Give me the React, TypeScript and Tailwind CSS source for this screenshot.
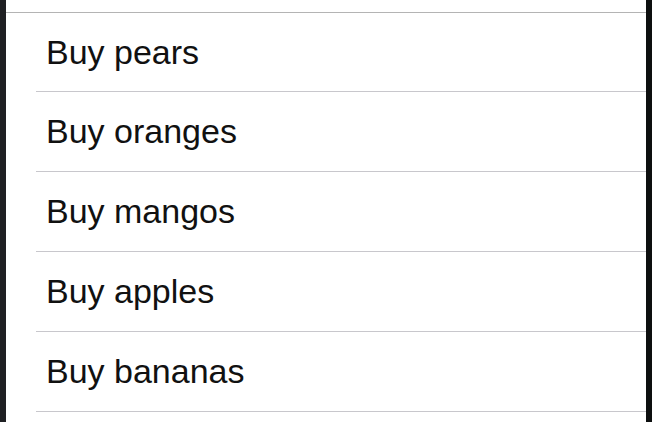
const items = ['Buy pears', 'Buy oranges', 'Buy mangos', 'Buy apples', 'Buy bananas'];

export default function App() {
  return (
    <div className="flex h-[422px] w-[652px] overflow-hidden bg-[#1c1d20]">
      <div className="w-[6px] bg-[#1f2023]" />
      <div className="flex-1 bg-white">
        <div className="h-[12px]" />
        <div className="h-px bg-[#b4b4b4]" />
        {items.map((item, i) => (
          <div key={item}>
            <div
              className={`flex items-center pl-[40px] text-[34px] text-[#111] ${i === 0 ? 'h-[78px]' : 'h-[79px]'}`}
              style={{ fontFamily: '"Liberation Sans", Arial, sans-serif' }}
            >
              {item}
            </div>
            <div className="ml-[30px] h-px bg-[#c8c7cc]" />
          </div>
        ))}
      </div>
      <div className="w-[6px] bg-[#0d0f0f]" />
    </div>
  );
}
